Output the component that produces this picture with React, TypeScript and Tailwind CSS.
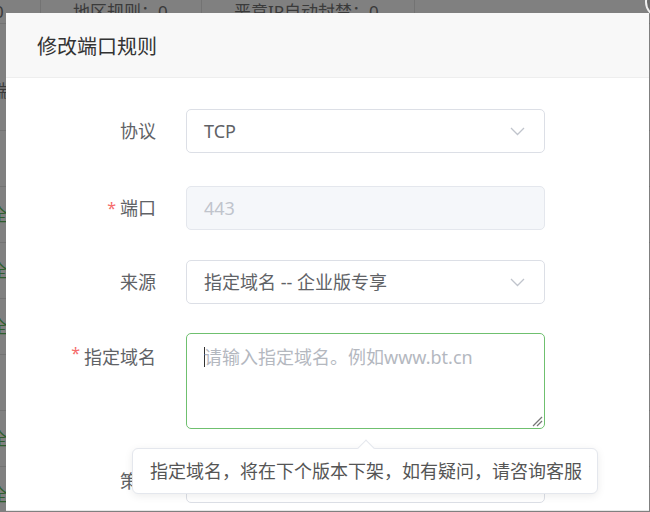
import React from "react";

const F = "font-['Noto_Sans','Noto_Sans_CJK_SC',sans-serif]";

function Chevron() {
  return (
    <svg width="15" height="9" viewBox="0 0 15 9" className="shrink-0">
      <polyline points="1,1 7.5,7.5 14,1" fill="none" stroke="#c0c4cc" strokeWidth="1.3" />
    </svg>
  );
}

function Label({ text, required, top }: { text: string; required?: boolean; top?: boolean }) {
  return (
    <div
      className={`w-[150px] shrink-0 flex justify-end text-[18px] text-[#606266] ${
        top ? "items-start pt-[12px]" : "items-center"
      }`}
    >
      {required && <span className="text-[#f56c6c] text-[16px] mr-[4px] leading-none">*</span>}
      <span className="leading-[24px]">{text}</span>
    </div>
  );
}

export default function App() {
  const rows = [false, true, true, true, false, true, true];
  return (
    <div className={`relative w-[650px] h-[512px] overflow-hidden bg-[#808080] ${F}`}>
      {/* background page under the overlay */}
      <div className="flex flex-col text-[17px] text-[#3a3a3a]">
        <div className="flex h-[24px] items-center border-b border-[#737373]">
          <div className="w-[47px] h-full flex items-center border-r border-[#737373] -ml-[6px]">0</div>
          <div className="w-[161px] h-full flex items-center pl-[32px] border-r border-[#737373]">地区规则：0</div>
          <div className="w-[213px] h-full flex items-center pl-[32px] border-r border-[#737373]">恶意IP自动封禁：0</div>
        </div>
        <div className="h-[107px] pt-[54px] -ml-[8px] border-b border-[#737373]">端口</div>
        {rows.map((g, i) => (
          <div key={i} className="h-[56px] flex items-center -ml-[9px] text-[#2e5e2e] border-b border-[#737373]">
            {g ? "全" : ""}
          </div>
        ))}
      </div>

      {/* close button of the layer */}
      <div className="absolute left-[645px] top-[-14px] w-[32px] h-[32px] rounded-full border-2 border-[#f0f0f0] bg-[#6a6a6a]" />

      {/* dialog */}
      <div className="absolute left-[6px] top-[13px] w-[643px] h-[498px] bg-white flex flex-col border-b border-[#e6e6e6]">
        <div className="h-[65px] shrink-0 bg-[#f8f8f8] border-b border-[#eeeeee] flex items-center pl-[31px] pt-[3px] text-[20px] text-[#333]">
          修改端口规则
        </div>
        <div className="flex flex-col pt-[31px]">
          {/* 协议 */}
          <div className="flex gap-[30px] h-[44px]">
            <Label text="协议" />
            <div className="w-[359px] h-[44px] border border-[#dcdfe6] rounded-[5px] flex items-center justify-between pl-[17px] pr-[19px] text-[18px] text-[#606266]">
              <span>TCP</span>
              <Chevron />
            </div>
          </div>
          {/* 端口 */}
          <div className="flex gap-[30px] h-[44px] mt-[33px]">
            <Label text="端口" required />
            <div className="w-[359px] h-[44px] border border-[#e4e7ed] bg-[#f5f7fa] rounded-[5px] flex items-center pl-[17px] text-[18px] text-[#c0c4cc]">
              443
            </div>
          </div>
          {/* 来源 */}
          <div className="flex gap-[30px] h-[44px] mt-[30px]">
            <Label text="来源" />
            <div className="w-[359px] h-[44px] border border-[#dcdfe6] rounded-[5px] flex items-center justify-between pl-[17px] pr-[19px] text-[18px] text-[#606266]">
              <span>指定域名 -- 企业版专享</span>
              <Chevron />
            </div>
          </div>
          {/* 指定域名 */}
          <div className="flex gap-[30px] mt-[29px]">
            <Label text="指定域名" required top />
            <div className="relative w-[359px] h-[96px] border-[1.5px] border-[#6fc06f] rounded-[5px] pl-[17px] pt-[10px] text-[18px] text-[#b4b8bf] leading-[26px] flex items-start">
              <span className="w-[1px] h-[20px] bg-[#333] mt-[3px] -mr-[1px]" />
              <span>请输入指定域名。例如www.bt.cn</span>
              <svg width="12" height="12" viewBox="0 0 12 12" className="absolute right-[1px] bottom-[1px]">
                <line x1="2" y1="11" x2="11" y2="2" stroke="#777" strokeWidth="1.2" />
                <line x1="6" y1="11" x2="11" y2="6" stroke="#777" strokeWidth="1.2" />
              </svg>
            </div>
          </div>
          {/* 策略 */}
          <div className="flex gap-[30px] h-[44px] mt-[30px]">
            <Label text="策略" />
            <div className="w-[359px] h-[44px] border border-[#dcdfe6] rounded-[5px] flex items-center justify-between pl-[17px] pr-[19px] text-[18px] text-[#606266]">
              <span>放行</span>
              <Chevron />
            </div>
          </div>
        </div>

        {/* tooltip */}
        <div className="absolute z-10 left-[126px] top-[435px] w-[466px] h-[46px] bg-white border border-[#e4e7ed] rounded-[6px] shadow-[0_2px_8px_rgba(0,0,0,0.08)] flex items-center pl-[17px] text-[18px] text-[#555] whitespace-nowrap">
          <span className="absolute left-[227px] top-[-7px] w-[12px] h-[12px] bg-white border-l border-t border-[#e4e7ed] rotate-45" />
          指定域名，将在下个版本下架，如有疑问，请咨询客服
        </div>
      </div>
    </div>
  );
}
